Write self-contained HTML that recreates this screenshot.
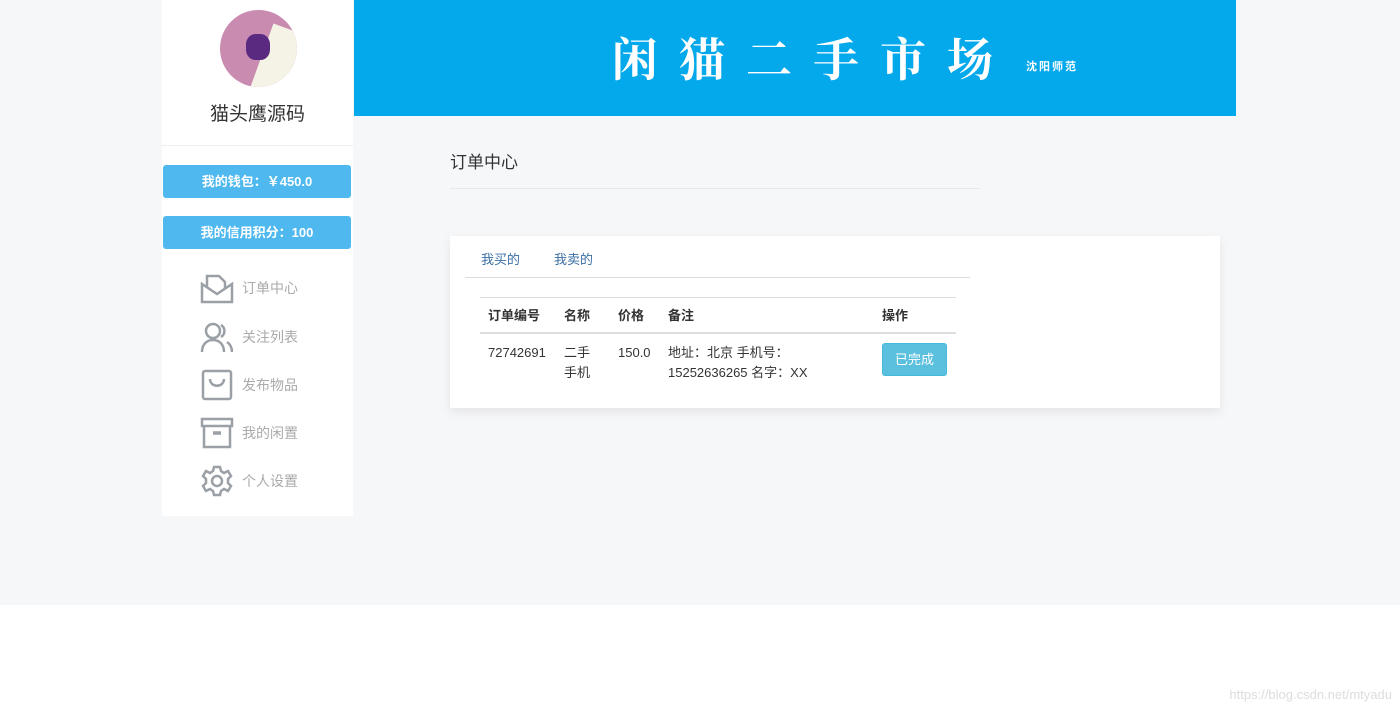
<!DOCTYPE html>
<html><head><meta charset="utf-8"><style>
*{margin:0;padding:0;box-sizing:border-box}
body{width:1400px;height:711px;background:#fff;font-family:"Liberation Sans","Noto Sans CJK SC",sans-serif;position:relative;overflow:hidden}
.bg{position:absolute;left:0;top:0;width:1400px;height:605px;background:#f6f7f9}
.side{position:absolute;left:162px;top:0;width:191px;height:516px;background:#fff}
.av{position:absolute;left:58px;top:10px;width:77px;height:77px;border-radius:50%;background:#c98bb0;overflow:hidden}
.name{position:absolute;left:0;width:191px;top:99px;text-align:center;font-size:19px;color:#333}
.hr{position:absolute;left:0;top:145px;width:191px;border-top:1px solid #eee}
.btn{position:absolute;left:1px;width:188px;height:33px;background:#4fb9ef;border-radius:3px;color:#fff;font-size:13px;font-weight:bold;text-align:center;line-height:33px}
.nav{position:absolute;left:38px;height:36px;display:flex;align-items:center;color:#aaa;font-size:14px}
.nav svg{margin-right:8px}
.head{position:absolute;left:354px;top:0;width:882px;height:116px;background:#04a9ec;color:#fff}
.t{position:absolute;left:258px;top:24px;font-size:46px;letter-spacing:21px;font-family:"Noto Serif CJK SC",serif;font-weight:bold}
.t2{position:absolute;left:672px;top:58px;font-size:11px;font-weight:bold;letter-spacing:2px}
.title{position:absolute;left:450px;top:148px;font-size:17px;color:#333}
.hr2{position:absolute;left:450px;top:188px;width:530px;border-top:1px solid #e8e8e8}
.card{position:absolute;left:450px;top:236px;width:770px;height:172px;background:#fff;box-shadow:0 4px 10px rgba(0,0,0,.08)}
.tab{position:absolute;top:13px;font-size:13px;color:#3a6ea5}
.tabl{position:absolute;left:15px;top:41px;width:505px;border-top:1px solid #ddd}
table{position:absolute;left:30px;top:61px;width:476px;border-collapse:collapse;font-size:13px;color:#333}
th{text-align:left;font-weight:bold;padding:0 8px;height:35px;border-top:1px solid #ddd;border-bottom:2px solid #ddd}
td{vertical-align:top;padding:9px 8px;line-height:20px}
.ok{display:inline-block;background:#5bc0de;color:#fff;border:1px solid #46b8da;border-radius:3px;padding:7px 12px;font-size:13px;line-height:17px}
.wm{position:absolute;right:8px;bottom:9px;font-size:13px;color:#ddd}
</style></head><body>
<div class="bg"></div>
<div class="side">
 <div class="av"><div style="position:absolute;left:40px;top:20px;width:50px;height:70px;background:#f5f3e6;transform:rotate(20deg)"></div><div style="position:absolute;left:26px;top:24px;width:24px;height:26px;background:#5a2a80;border-radius:40%"></div></div>
 <div class="name">猫头鹰源码</div>
 <div class="hr"></div>
 <div class="btn" style="top:165px">我的钱包：￥450.0</div>
 <div class="btn" style="top:216px">我的信用积分：100</div>
 <div class="nav" style="top:270px"><svg width="34" height="32" viewBox="0 0 34 32" fill="none" stroke="#9aa0a6" stroke-width="2.5"><path d="M2 12v18h30V12L17 22 2 12z"/><path d="M7 15V4h12l6 6v7"/></svg>订单中心</div>
 <div class="nav" style="top:319px"><svg width="34" height="32" viewBox="0 0 34 32" fill="none" stroke="#9aa0a6" stroke-width="2.5"><circle cx="13" cy="10" r="7"/><path d="M2 31c0-8 5-12 11-12s11 4 11 12"/><path d="M21 4a7 7 0 0 1 0 12M27 21c3 2 5 5 5 10"/></svg>关注列表</div>
 <div class="nav" style="top:367px"><svg width="34" height="32" viewBox="0 0 34 32" fill="none" stroke="#9aa0a6" stroke-width="2.5"><rect x="3" y="2" width="28" height="28" rx="2"/><path d="M10 10c0 9 14 9 14 0"/></svg>发布物品</div>
 <div class="nav" style="top:415px"><svg width="34" height="32" viewBox="0 0 34 32" fill="none" stroke="#9aa0a6" stroke-width="2.5"><rect x="2" y="2" width="30" height="7"/><path d="M4 9v21h26V9"/><path d="M13 16h8" stroke-width="3.5"/></svg>我的闲置</div>
 <div class="nav" style="top:463px"><svg width="34" height="32" viewBox="0 0 34 32" fill="none" stroke="#9aa0a6" stroke-width="2.5"><circle cx="17" cy="16" r="5"/><path d="M14 2h6l1 4 3 2 4-2 3 5-3 3v4l3 3-3 5-4-2-3 2-1 4h-6l-1-4-3-2-4 2-3-5 3-3v-4l-3-3 3-5 4 2 3-2z"/></svg>个人设置</div>
</div>
<div class="head"><div class="t">闲猫二手市场</div><div class="t2">沈阳师范</div></div>
<div class="title">订单中心</div>
<div class="hr2"></div>
<div class="card">
 <div class="tab" style="left:31px">我买的</div>
 <div class="tab" style="left:104px">我卖的</div>
 <div class="tabl"></div>
 <table>
  <tr><th style="width:76px">订单编号</th><th style="width:54px">名称</th><th style="width:50px">价格</th><th style="width:214px">备注</th><th>操作</th></tr>
  <tr><td>72742691</td><td>二手<br>手机</td><td>150.0</td><td>地址：北京 手机号：<br>15252636265 名字：XX</td><td><span class="ok">已完成</span></td></tr>
 </table>
</div>
<div class="wm">https://blog.csdn.net/mtyadu</div>
</body></html>
